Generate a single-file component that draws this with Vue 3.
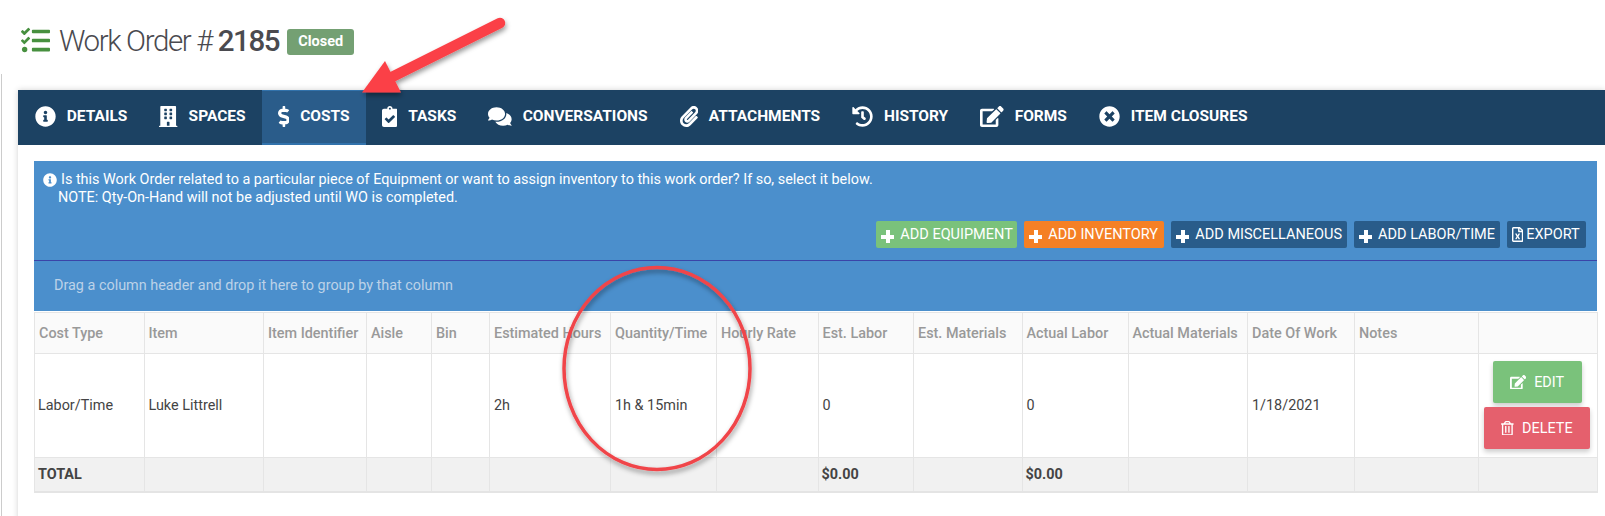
<script setup>
const P = {
  info: [512, 'M256 8C119.043 8 8 119.083 8 256c0 136.997 111.043 248 248 248s248-111.003 248-248C504 119.083 392.957 8 256 8zm0 110c23.196 0 42 18.804 42 42s-18.804 42-42 42-42-18.804-42-42 18.804-42 42-42zm56 254c0 6.627-5.373 12-12 12h-88c-6.627 0-12-5.373-12-12v-24c0-6.627 5.373-12 12-12h12v-64h-12c-6.627 0-12-5.373-12-12v-24c0-6.627 5.373-12 12-12h64c6.627 0 12 5.373 12 12v100h12c6.627 0 12 5.373 12 12v24z'],
  building: [448, 'M436 480h-20V24c0-13.255-10.745-24-24-24H56C42.745 0 32 10.745 32 24v456H12c-6.627 0-12 5.373-12 12v20h448v-20c0-6.627-5.373-12-12-12zM128 76c0-6.627 5.373-12 12-12h40c6.627 0 12 5.373 12 12v40c0 6.627-5.373 12-12 12h-40c-6.627 0-12-5.373-12-12V76zm0 96c0-6.627 5.373-12 12-12h40c6.627 0 12 5.373 12 12v40c0 6.627-5.373 12-12 12h-40c-6.627 0-12-5.373-12-12v-40zm52 148h-40c-6.627 0-12-5.373-12-12v-40c0-6.627 5.373-12 12-12h40c6.627 0 12 5.373 12 12v40c0 6.627-5.373 12-12 12zm76 160h-64v-84c0-6.627 5.373-12 12-12h40c6.627 0 12 5.373 12 12v84zm64-172c0 6.627-5.373 12-12 12h-40c-6.627 0-12-5.373-12-12v-40c0-6.627 5.373-12 12-12h40c6.627 0 12 5.373 12 12v40zm0-96c0 6.627-5.373 12-12 12h-40c-6.627 0-12-5.373-12-12v-40c0-6.627 5.373-12 12-12h40c6.627 0 12 5.373 12 12v40zm0-96c0 6.627-5.373 12-12 12h-40c-6.627 0-12-5.373-12-12V76c0-6.627 5.373-12 12-12h40c6.627 0 12 5.373 12 12v40z'],
  dollar: [288, 'M209.2 233.4l-108-31.6C88.7 198.2 80 186.5 80 173.5c0-16.3 13.2-29.5 29.5-29.5h66.3c12.2 0 24.2 3.7 34.2 10.5 6.1 4.1 14.3 3.1 19.5-2l34.8-34c7.1-6.9 6.1-18.4-1.8-24.5C238 74.8 207.4 64.1 176 64V16c0-8.8-7.2-16-16-16h-32c-8.8 0-16 7.2-16 16v48h-2.5C45.8 64-5.4 118.7.5 183.6c4.2 46.1 39.4 83.6 83.8 96.6l102.5 30c12.5 3.7 21.2 15.3 21.2 28.3 0 16.3-13.2 29.5-29.5 29.5h-66.3C100 368 88 364.3 78 357.5c-6.1-4.1-14.3-3.1-19.5 2l-34.8 34c-7.1 6.9-6.1 18.4 1.8 24.5 24.5 19.2 55.1 29.9 86.5 30v48c0 8.8 7.2 16 16 16h32c8.8 0 16-7.2 16-16v-48.2c46.6-.9 90.3-28.6 105.7-72.7 21.5-61.6-14.6-124.8-72.5-141.7z'],
  clipboard: [384, 'M336 64h-80c0-35.3-28.7-64-64-64s-64 28.7-64 64H48C21.5 64 0 85.5 0 112v352c0 26.5 21.5 48 48 48h288c26.5 0 48-21.5 48-48V112c0-26.5-21.5-48-48-48zM192 40c13.3 0 24 10.7 24 24s-10.7 24-24 24-24-10.7-24-24 10.7-24 24-24zm121.2 231.8l-143 141.8c-4.7 4.7-12.3 4.6-17-.1l-82.6-83.3c-4.7-4.7-4.6-12.3.1-17L99.1 285c4.7-4.7 12.3-4.6 17 .1l46 46.4 106-105.2c4.7-4.7 12.3-4.6 17 .1l28.2 28.4c4.7 4.8 4.6 12.3-.1 17z'],
  comments: [576, 'M416 192c0-88.4-93.1-160-208-160S0 103.6 0 192c0 34.3 14.1 65.9 38 92-13.4 30.2-35.5 54.2-35.8 54.5-2.2 2.3-2.8 5.7-1.5 8.7S4.8 352 8 352c36.6 0 66.9-12.3 88.7-25 32.2 15.7 70.3 25 111.3 25 114.9 0 208-71.6 208-160zm122 220c23.9-26 38-57.7 38-92 0-66.9-53.5-124.2-129.3-148.1.9 6.6 1.3 13.3 1.3 20.1 0 105.9-107.7 192-240 192-10.8 0-21.3-.8-31.7-1.9C207.8 439.6 281.8 480 368 480c41 0 79.1-9.2 111.3-25 21.8 12.7 52.1 25 88.7 25 3.2 0 6.1-1.9 7.3-4.8 1.3-2.9.7-6.3-1.5-8.7-.3-.3-22.4-24.2-35.8-54.5z'],
  paperclip: [448, 'M43.246 466.142c-58.43-60.289-57.341-157.511 1.386-217.581L254.392 34c44.316-45.332 116.351-45.336 160.671 0 43.89 44.894 43.943 117.329 0 162.276L232.214 383.128c-29.855 30.537-78.633 30.111-107.982-.998-28.275-29.97-27.368-77.473 1.452-106.953l143.743-146.835c6.182-6.314 16.312-6.422 22.626-.241l22.861 22.379c6.315 6.182 6.422 16.312.241 22.626L171.427 319.927c-4.932 5.045-5.236 13.428-.648 18.292 4.372 4.634 11.245 4.711 15.688.165l182.849-186.851c19.613-20.062 19.613-52.725-.011-72.798-19.189-19.627-49.957-19.637-69.154 0L90.39 293.295c-34.763 35.56-35.299 93.12-1.191 128.313 34.01 35.093 88.985 35.137 123.058.286l172.06-175.999c6.177-6.319 16.307-6.433 22.626-.256l22.877 22.364c6.319 6.177 6.434 16.307.256 22.626l-172.06 175.998c-59.576 60.938-155.943 60.216-214.77-.485z'],
  history: [512, 'M504 255.531c.253 136.64-111.18 248.372-247.82 248.468-59.015.042-113.223-20.53-155.822-54.911-11.077-8.94-11.905-25.541-1.839-35.607l11.267-11.267c8.609-8.609 22.353-9.551 31.891-1.984C173.062 425.135 212.781 440 256 440c101.705 0 184-82.311 184-184 0-101.705-82.311-184-184-184-48.814 0-93.149 18.969-126.068 49.932l50.754 50.754c10.08 10.08 2.941 27.314-11.313 27.314H24c-8.837 0-16-7.163-16-16V38.627c0-14.254 17.234-21.393 27.314-11.314l49.372 49.372C129.209 34.136 189.552 8 256 8c136.81 0 247.747 110.78 248 247.531zm-180.912 78.784l9.823-12.63c8.138-10.463 6.253-25.542-4.21-33.679L288 256.349V152c0-13.255-10.745-24-24-24h-16c-13.255 0-24 10.745-24 24v135.651l65.409 50.874c10.463 8.137 25.541 6.253 33.679-4.21z'],
  edit: [576, 'M402.6 83.2l90.2 90.2c3.8 3.8 3.8 10 0 13.8L274.4 405.6l-92.8 10.3c-12.4 1.4-22.9-9.1-21.5-21.5l10.3-92.8L388.8 83.2c3.8-3.8 10-3.8 13.8 0zm162-22.9l-48.8-48.8c-15.2-15.2-39.9-15.2-55.2 0l-35.4 35.4c-3.8 3.8-3.8 10 0 13.8l90.2 90.2c3.8 3.8 10 3.8 13.8 0l35.4-35.4c15.2-15.3 15.2-40 0-55.2zM384 346.2V448H64V128h229.8c3.2 0 6.2-1.3 8.5-3.5l40-40c7.6-7.6 2.2-20.5-8.5-20.5H48C21.5 64 0 85.5 0 112v352c0 26.5 21.5 48 48 48h352c26.5 0 48-21.5 48-48V306.2c0-10.7-12.9-16-20.5-8.5l-40 40c-2.2 2.3-3.5 5.3-3.5 8.5z'],
  times: [512, 'M256 8C119 8 8 119 8 256s111 248 248 248 248-111 248-248S393 8 256 8zm121.6 313.1c4.7 4.7 4.7 12.3 0 17L338 377.6c-4.7 4.7-12.3 4.7-17 0L256 312l-65.1 65.6c-4.7 4.7-12.3 4.7-17 0L134.4 338c-4.7-4.7-4.7-12.3 0-17l65.6-65-65.6-65.1c-4.7-4.7-4.7-12.3 0-17l39.6-39.6c4.7-4.7 12.3-4.7 17 0l65 65.7 65.1-65.6c4.7-4.7 12.3-4.7 17 0l39.6 39.6c4.7 4.7 4.7 12.3 0 17L312 256l65.6 65.1z'],
  trash: [448, 'M268 416h24a12 12 0 0 0 12-12V188a12 12 0 0 0-12-12h-24a12 12 0 0 0-12 12v216a12 12 0 0 0 12 12zM432 80h-82.41l-34-56.7A48 48 0 0 0 274.41 0H173.59a48 48 0 0 0-41.16 23.3L98.41 80H16A16 16 0 0 0 0 96v16a16 16 0 0 0 16 16h16v336a48 48 0 0 0 48 48h288a48 48 0 0 0 48-48V128h16a16 16 0 0 0 16-16V96a16 16 0 0 0-16-16zM171.84 50.91A6 6 0 0 1 177 48h94a6 6 0 0 1 5.15 2.91L293.61 80H154.39zM368 464H80V128h288zm-212-48h24a12 12 0 0 0 12-12V188a12 12 0 0 0-12-12h-24a12 12 0 0 0-12 12v216a12 12 0 0 0 12 12z'],
  excel: [384, 'M369.9 97.9L286 14C277 5 264.8-.1 252.1-.1H48C21.5 0 0 21.5 0 48v416c0 26.5 21.5 48 48 48h288c26.5 0 48-21.5 48-48V131.9c0-12.7-5.1-25-14.1-34zM332.1 128H256V51.9l76.1 76.1zM48 464V48h160v104c0 13.3 10.7 24 24 24h104v288H48zm212-240h-28.8c-4.4 0-8.4 2.4-10.5 6.3-18 33.1-22.2 42.4-28.6 57.7-13.9-29.1-6.9-17.3-28.6-57.7-2.1-3.9-6.2-6.3-10.6-6.3H124c-9.3 0-15 10-10.4 18l46.3 78-46.3 78c-4.7 8 1.1 18 10.4 18h28.9c4.4 0 8.4-2.4 10.5-6.3 21.7-40 23-45 28.6-57.7 14.9 30.2 5.9 15.9 28.6 57.7 2.1 3.9 6.2 6.3 10.6 6.3H260c9.3 0 15-10 10.4-18L224 320c.7-1.1 30.3-50.5 46.3-78 4.7-8-1.1-18-10.3-18z'],
  tasks: [512, 'M139.61 35.5a12 12 0 0 0-17 0L58.93 98.81l-22.7-22.12a12 12 0 0 0-17 0L3.53 92.41a12 12 0 0 0 0 17l47.59 47.4a12.78 12.78 0 0 0 17.61 0l15.59-15.62L156.52 69a12.09 12.09 0 0 0 .09-17zm0 159.19a12 12 0 0 0-17 0l-63.68 63.72-22.7-22.1a12 12 0 0 0-17 0L3.53 252a12 12 0 0 0 0 17L51 316.5a12.77 12.77 0 0 0 17.6 0l15.7-15.69 72.2-72.22a12 12 0 0 0 .09-16.9zM64 368c-26.49 0-48.59 21.5-48.59 48S37.53 464 64 464a48 48 0 0 0 0-96zm432 16H208a16 16 0 0 0-16 16v32a16 16 0 0 0 16 16h288a16 16 0 0 0 16-16v-32a16 16 0 0 0-16-16zm0-320H208a16 16 0 0 0-16 16v32a16 16 0 0 0 16 16h288a16 16 0 0 0 16-16V80a16 16 0 0 0-16-16zm0 160H208a16 16 0 0 0-16 16v32a16 16 0 0 0 16 16h288a16 16 0 0 0 16-16v-32a16 16 0 0 0-16-16z'],
}
const tabs = [
  { label: 'DETAILS', icon: 'info' },
  { label: 'SPACES', icon: 'building' },
  { label: 'COSTS', icon: 'dollar', active: true },
  { label: 'TASKS', icon: 'clipboard' },
  { label: 'CONVERSATIONS', icon: 'comments' },
  { label: 'ATTACHMENTS', icon: 'paperclip' },
  { label: 'HISTORY', icon: 'history' },
  { label: 'FORMS', icon: 'edit' },
  { label: 'ITEM CLOSURES', icon: 'times' },
]
const actions = [
  { label: 'ADD EQUIPMENT', kind: 'green' },
  { label: 'ADD INVENTORY', kind: 'orange' },
  { label: 'ADD MISCELLANEOUS', kind: 'navy' },
  { label: 'ADD LABOR/TIME', kind: 'navy' },
]
const widths = [109.5, 119.5, 103, 65, 58, 121, 106, 101.5, 95.5, 108.5, 106, 119.5, 107, 124, 119]
const heads = ['Cost Type', 'Item', 'Item Identifier', 'Aisle', 'Bin', 'Estimated Hours', 'Quantity/Time', 'Hourly Rate', 'Est. Labor', 'Est. Materials', 'Actual Labor', 'Actual Materials', 'Date Of Work', 'Notes', '']
const row = ['Labor/Time', 'Luke Littrell', '', '', '', '2h', '1h & 15min', '', '0', '', '0', '', '1/18/2021', '']
const totals = ['TOTAL', '', '', '', '', '', '', '', '$0.00', '', '$0.00', '', '', '', '']
const h = (name, size) => ({ viewBox: `0 0 ${P[name][0]} 512`, height: size, width: (P[name][0] / 512) * size })
</script>

<template>
  <div class="page">
    <header class="title-row">
      <svg class="tasks-icon" v-bind="h('tasks', 29)"><path :d="P.tasks[1]" /></svg>
      <h1 class="title">Work Order # <b>2185</b></h1>
      <span class="badge">Closed</span>
    </header>

    <main class="main">
      <section class="panel">
        <nav class="tabs">
          <a v-for="t in tabs" :key="t.label" class="tab" :class="{ active: t.active }">
            <svg v-bind="h(t.icon, 21)"><path :d="P[t.icon][1]" /></svg>
            <span>{{ t.label }}</span>
          </a>
        </nav>

        <div class="content">
          <div class="blue">
            <div class="notice">
              <svg class="notice-icon" v-bind="h('info', 14)"><path :d="P.info[1]" /></svg>
              <p>Is this Work Order related to a particular piece of Equipment or want to assign inventory to this work order? If so, select it below.<br /><span class="note">NOTE: Qty-On-Hand will not be adjusted until WO is completed.</span></p>
            </div>
            <div class="actions">
              <button v-for="a in actions" :key="a.label" class="act" :class="a.kind">
                <span class="plus"></span>{{ a.label }}
              </button>
              <button class="act navy export">
                <svg v-bind="h('excel', 15)"><path :d="P.excel[1]" /></svg>EXPORT
              </button>
            </div>
            <div class="group-bar">Drag a column header and drop it here to group by that column</div>
          </div>

          <table class="grid">
            <colgroup><col v-for="(w, i) in widths" :key="i" :style="{ width: w + 'px' }" /></colgroup>
            <thead>
              <tr><th v-for="(c, i) in heads" :key="i">{{ c }}</th></tr>
            </thead>
            <tbody>
              <tr class="data">
                <td v-for="(c, i) in row" :key="i">{{ c }}</td>
                <td class="ops">
                  <button class="op edit"><svg v-bind="h('edit', 14.5)"><path :d="P.edit[1]" /></svg>EDIT</button>
                  <button class="op del"><svg v-bind="h('trash', 14.5)"><path :d="P.trash[1]" /></svg>DELETE</button>
                </td>
              </tr>
            </tbody>
            <tfoot>
              <tr><td v-for="(c, i) in totals" :key="i">{{ c }}</td></tr>
            </tfoot>
          </table>
        </div>
      </section>
    </main>

    <svg class="annot" width="1605" height="516" viewBox="0 0 1605 516">
      <defs>
        <filter id="sh" x="-20%" y="-20%" width="140%" height="140%">
          <feDropShadow dx="1" dy="3" stdDeviation="2.5" flood-color="#000" flood-opacity="0.4" />
        </filter>
      </defs>
      <g filter="url(#sh)">
        <path d="M500 23 L390 78" stroke="#fb4146" stroke-width="10.5" stroke-linecap="round" fill="none" />
        <path d="M362 92.5 L385 61 L401 92.5 Z" fill="#fb4146" />
      </g>
      <ellipse cx="657" cy="368.5" rx="93" ry="101" fill="none" stroke="#f0454a" stroke-width="3.5" filter="url(#sh)" />
    </svg>
  </div>
</template>

<style scoped>
.page { position: relative; width: 1605px; height: 516px; overflow: hidden; background: #fff; font-family: Roboto, "Liberation Sans", sans-serif; }
.title-row { height: 74px; box-sizing: border-box; padding: 26px 0 0 21px; display: flex; align-items: flex-start; }
.tasks-icon { fill: #47903f; flex: none; }
.title { margin: -3px 0 0 9px; font-size: 29.5px; line-height: 36px; font-weight: 300; color: #4a4a4f; letter-spacing: -1.4px; white-space: pre; }
.title b { font-weight: 500; }
.badge { margin: 3px 0 0 8px; width: 67px; height: 26px; line-height: 26px; text-align: center; background: #74a073; color: #fff; border-radius: 3px; font-size: 14.5px; font-weight: 700; }
.main { height: 442px; margin-left: 1px; border-left: 1px solid #ccc; padding: 16px 0 0 16px; }
.panel { height: 100%; background: #fff; box-shadow: 0 0 6px rgba(0, 0, 0, 0.18); }
.tabs { height: 55px; background: #1c4263; display: flex; padding-left: 1px; }
.tab { display: flex; align-items: center; gap: 10.8px; padding: 0 16px 3px; color: #fff; font-size: 15.5px; font-weight: 700; box-sizing: border-box; }
.tab svg { fill: #fff; flex: none; }
.tab.active { background: #2a5c8a; border-bottom: 2px solid #3272ab; border-top: 1px solid #3272ab; padding-bottom: 2px; }
.content { padding: 16px 8px 0 16px; }
.blue { background: #4b8fcc; height: 150px; color: #fff; position: relative; display: flex; flex-direction: column; }
.notice { display: flex; padding: 10px 0 0 9px; height: 60px; box-sizing: border-box; }
.notice-icon { fill: #fff; flex: none; margin: 2px 4px 0 0; }
.notice p { margin: 0; font-size: 14.4px; line-height: 18px; }
.note { margin-left: -3px; }
.actions { height: 39px; display: flex; justify-content: flex-end; gap: 7px; padding-right: 11px; align-items: flex-start; border-bottom: 1px solid #3a44a8; }
.act { height: 27px; border: 0; border-radius: 2px; color: #fff; font: 400 14.5px Roboto, sans-serif; display: flex; align-items: center; padding: 0 5px; white-space: nowrap; }
.green { background: #7ac27b; width: 141px; }
.orange { background: #f58025; width: 140px; }
.navy { background: #295c8a; }
.act.export { width: 79px; gap: 3px; padding-left: 5px; }
.export svg { fill: #fff; flex: none; }
.plus { width: 13px; height: 13px; margin: 4px 6px 0 0; flex: none; background: linear-gradient(#fff, #fff) center/100% 4px no-repeat, linear-gradient(#fff, #fff) center/4px 100% no-repeat; }
.group-bar { flex: 1; padding: 17px 0 0 20px; font-size: 14.4px; line-height: 16px; color: #bcd2e8; }
.grid { width: 1563px; table-layout: fixed; border-collapse: collapse; margin-top: 1px; font-size: 14.4px; color: #444; border-bottom: 2px solid #e4e4e4; }
.grid th, .grid td { border: 1px solid #e5e5e5; box-sizing: border-box; white-space: nowrap; overflow: hidden; text-align: left; }
.grid th { height: 41px; background: #fafafa; color: #999; font-weight: 500; padding: 0 0 0 4px; }
.grid tbody td { height: 104px; padding: 0 0 0 4px; background: #fff; }
.grid tbody td:first-child { padding-left: 3px; }
.grid tfoot td { height: 34px; background: #f1f1f1; font-weight: 700; padding: 0 0 0 3px; color: #444; }
.grid .ops { padding: 0 2px 2px 0; overflow: visible; }
.op { display: flex; align-items: center; justify-content: center; gap: 8px; height: 42px; border: 0; border-radius: 2px; color: #fff; font: 400 14.4px Roboto, sans-serif; margin: 0 auto; padding: 1px 0 0; box-shadow: 0 3px 5px rgba(0, 0, 0, 0.2); }
.op svg { fill: #fff; }
.edit { background: #7ac27b; width: 89px; margin-bottom: 4px; }
.del { background: #e5606d; width: 106px; }
.annot { position: absolute; left: 0; top: 0; pointer-events: none; }
</style>

<style>
body { overflow: hidden; background: #fff; }
</style>
